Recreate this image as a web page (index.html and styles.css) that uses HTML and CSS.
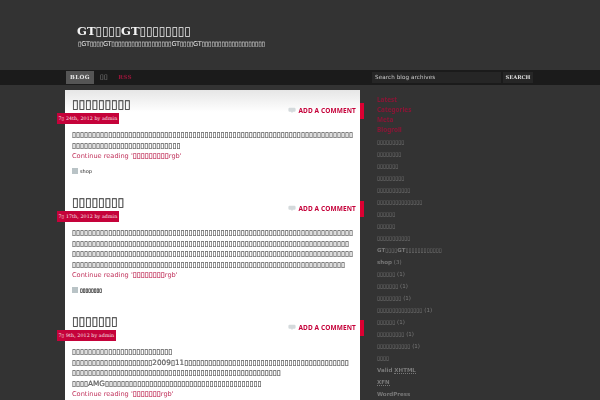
FILE: index.html
```html
<!DOCTYPE html>
<html lang="ja">
<head>
<meta charset="utf-8">
<title>GT blog</title>
<link rel="stylesheet" href="styles.css">
</head>
<body>
<div class="page">
<header class="masthead">
  <h1 class="site-title">GT▯▯▯▯GT▯▯▯▯▯▯▯▯</h1>
  <p class="site-desc">▯GT▯▯▯▯GT▯▯▯▯▯▯▯▯▯▯▯▯▯▯▯▯▯▯GT▯▯▯▯GT▯▯▯▯▯▯▯▯▯▯▯▯▯▯▯▯▯▯▯</p>
</header>
<nav class="navbar">
  <div class="nav-links">
    <a class="nav-active">BLOG</a>
    <a class="nav-plain">▯▯</a>
    <a class="nav-rss">RSS</a>
  </div>
  <form class="search">
    <div class="search-field">Search blog archives</div>
    <div class="search-btn">SEARCH</div>
  </form>
</nav>
<div class="columns">
  <main class="content">
    <article class="post">
      <div class="post-head">
        <h2 class="post-title">▯▯▯▯▯▯▯▯▯</h2>
        <a class="comment"><svg class="bubble" viewBox="0 0 10 8"><path d="M2 0.5h6a1.5 1.5 0 0 1 1.5 1.5v2a1.5 1.5 0 0 1-1.5 1.5H6L5 7.5 4 5.500H2A1.500 1.500 0 0 1 .5 4V2A1.500 1.500 0 0 1 2 .5z"/></svg>ADD A COMMENT</a>
      </div>
      <div class="date">7▯ 24th, 2012 by admin</div>
      <p class="body-text"><span class="box">▯▯▯▯▯▯▯▯▯▯▯▯▯▯▯▯▯▯▯▯▯▯▯▯▯▯▯▯▯▯▯▯▯▯▯▯▯▯▯▯▯▯▯▯▯▯▯▯▯▯▯▯▯▯▯▯▯▯▯▯▯▯▯▯▯▯▯▯▯▯<br>▯▯▯▯▯▯▯▯▯▯▯▯▯▯▯▯▯▯▯▯▯▯▯▯▯▯▯</span><br><a class="more">Continue reading '<span class="more-box">▯▯▯▯▯▯▯▯▯</span>rgb'</a></p>
      <div class="tags"><span class="tag-icon"></span>shop</div>
    </article>
    <article class="post">
      <div class="post-head">
        <h2 class="post-title">▯▯▯▯▯▯▯▯</h2>
        <a class="comment"><svg class="bubble" viewBox="0 0 10 8"><path d="M2 0.5h6a1.5 1.5 0 0 1 1.5 1.5v2a1.5 1.5 0 0 1-1.5 1.5H6L5 7.5 4 5.500H2A1.500 1.500 0 0 1 .5 4V2A1.500 1.500 0 0 1 2 .5z"/></svg>ADD A COMMENT</a>
      </div>
      <div class="date">7▯ 17th, 2012 by admin</div>
      <p class="body-text"><span class="box">▯▯▯▯▯▯▯▯▯▯▯▯▯▯▯▯▯▯▯▯▯▯▯▯▯▯▯▯▯▯▯▯▯▯▯▯▯▯▯▯▯▯▯▯▯▯▯▯▯▯▯▯▯▯▯▯▯▯▯▯▯▯▯▯▯▯▯▯▯▯<br>▯▯▯▯▯▯▯▯▯▯▯▯▯▯▯▯▯▯▯▯▯▯▯▯▯▯▯▯▯▯▯▯▯▯▯▯▯▯▯▯▯▯▯▯▯▯▯▯▯▯▯▯▯▯▯▯▯▯▯▯▯▯▯▯▯▯▯▯▯<br>▯▯▯▯▯▯▯▯▯▯▯▯▯▯▯▯▯▯▯▯▯▯▯▯▯▯▯▯▯▯▯▯▯▯▯▯▯▯▯▯▯▯▯▯▯▯▯▯▯▯▯▯▯▯▯▯▯▯▯▯▯▯▯▯▯▯▯▯▯▯<br>▯▯▯▯▯▯▯▯▯▯▯▯▯▯▯▯▯▯▯▯▯▯▯▯▯▯▯▯▯▯▯▯▯▯▯▯▯▯▯▯▯▯▯▯▯▯▯▯▯▯▯▯▯▯▯▯▯▯▯▯▯▯▯▯▯▯▯▯</span><br><a class="more">Continue reading '<span class="more-box">▯▯▯▯▯▯▯▯</span>rgb'</a></p>
      <div class="tags"><span class="tag-icon"></span><span class="tag-box">▯▯▯▯▯▯▯▯</span></div>
    </article>
    <article class="post">
      <div class="post-head">
        <h2 class="post-title">▯▯▯▯▯▯▯</h2>
        <a class="comment"><svg class="bubble" viewBox="0 0 10 8"><path d="M2 0.5h6a1.5 1.5 0 0 1 1.5 1.5v2a1.5 1.5 0 0 1-1.5 1.5H6L5 7.5 4 5.500H2A1.500 1.500 0 0 1 .5 4V2A1.500 1.500 0 0 1 2 .5z"/></svg>ADD A COMMENT</a>
      </div>
      <div class="date">7▯ 9th, 2012 by admin</div>
      <p class="body-text"><span class="box">▯▯▯▯▯▯▯▯▯▯▯▯▯▯▯▯▯▯▯▯▯▯▯▯▯<br>▯▯▯▯▯▯▯▯▯▯▯▯▯▯▯▯▯▯▯▯2009▯11▯▯▯▯▯▯▯▯▯▯▯▯▯▯▯▯▯▯▯▯▯▯▯▯▯▯▯▯▯▯▯▯▯▯▯▯▯▯▯▯▯<br>▯▯▯▯▯▯▯▯▯▯▯▯▯▯▯▯▯▯▯▯▯▯▯▯▯▯▯▯▯▯▯▯▯▯▯▯▯▯▯▯▯▯▯▯▯▯▯▯▯▯▯▯<br>▯▯▯▯AMG▯▯▯▯▯▯▯▯▯▯▯▯▯▯▯▯▯▯▯▯▯▯▯▯▯▯▯▯▯▯▯▯▯▯▯▯▯▯▯</span><br><a class="more">Continue reading '<span class="more-box">▯▯▯▯▯▯▯</span>rgb'</a></p>
    </article>
  </main>
  <aside class="sidebar">
    <ul class="tabs">
      <li>Latest</li>
      <li>Categories</li>
      <li>Meta</li>
      <li>Blogroll</li>
    </ul>
    <ul class="links">
      <li>▯▯▯▯▯▯▯▯▯</li>
      <li>▯▯▯▯▯▯▯▯</li>
      <li>▯▯▯▯▯▯▯</li>
      <li>▯▯▯▯▯▯▯▯▯</li>
      <li>▯▯▯▯▯▯▯▯▯▯▯</li>
      <li>▯▯▯▯▯▯▯▯▯▯▯▯▯▯▯</li>
      <li>▯▯▯▯▯▯</li>
      <li>▯▯▯▯▯▯</li>
      <li>▯▯▯▯▯▯▯▯▯▯▯</li>
      <li>GT▯▯▯▯GT▯▯▯▯▯▯▯▯▯▯▯▯</li>
      <li>shop <span class="count">(3)</span></li>
      <li>▯▯▯▯▯▯ <span class="count">(1)</span></li>
      <li>▯▯▯▯▯▯▯ <span class="count">(1)</span></li>
      <li>▯▯▯▯▯▯▯▯ <span class="count">(1)</span></li>
      <li>▯▯▯▯▯▯▯▯▯▯▯▯▯▯▯ <span class="count">(1)</span></li>
      <li>▯▯▯▯▯▯ <span class="count">(1)</span></li>
      <li>▯▯▯▯▯▯▯▯▯ <span class="count">(1)</span></li>
      <li>▯▯▯▯▯▯▯▯▯▯▯ <span class="count">(1)</span></li>
      <li>▯▯▯▯</li>
      <li>Valid <span class="abbr">XHTML</span></li>
      <li><span class="abbr">XFN</span></li>
      <li>WordPress</li>
    </ul>
  </aside>
</div>
</div>
</body>
</html>
```
FILE: styles.css
```css
* { box-sizing: border-box; }
html, body { margin: 0; padding: 0; height: 400px; overflow: hidden; }
body { background: #333333; font-family: "DejaVu Sans", sans-serif; }
ul { list-style: none; margin: 0; padding: 0; }
p, h1, h2 { margin: 0; }
.page { width: 600px; height: 400px; overflow: hidden; filter: blur(0.25px); }
.masthead { height: 70px; padding: 24px 0 0 77px; }
.site-title { font: bold 11.6px/15px "DejaVu Serif", serif; color: #f4f4f4; }
.site-desc { font-size: 6.6px; line-height: 9px; letter-spacing: -.29px; color: #e8e8e8; margin: 1px 0 0 1px; white-space: nowrap; }
.navbar { height: 15px; background: #1b1b1b; display: flex; align-items: center; padding-left: 66px; }
.nav-links { display: flex; align-items: center; width: 306px; }
.nav-links a { font: bold 5.6px/13px "DejaVu Serif", serif; letter-spacing: .4px; }
.nav-active { background: #555; color: #e6e6e6; padding: 0 4px; height: 13px; }
.nav-plain { color: #9a9a9a; margin-left: 6px; font-size: 6.8px !important; }
.nav-rss { color: #98163a; margin-left: 10px; }
.search { display: flex; align-items: center; gap: 2px; }
.search-field { width: 129px; height: 11px; background: #262626; color: #ccc; font-size: 5.6px; line-height: 11px; padding-left: 3px; letter-spacing: .1px; }
.search-btn { width: 30px; height: 11px; background: #262626; color: #ddd; font: bold 5.2px/11px "DejaVu Serif", serif; text-align: center; }
.columns { display: flex; padding: 5px 0 0 65px; }
.content { width: 295px; height: 400px; background: linear-gradient(#e6e6e6, #fff 22px, #fff); padding: 7px 8px 0 7px; flex: none; }
.post { padding-bottom: 20.5px; position: relative; }
.post-head { display: flex; justify-content: space-between; align-items: flex-start; height: 15px; }
.post-title { font: normal 11.8px/15px "DejaVu Sans", sans-serif; color: #3c3c3c; -webkit-text-stroke: .25px #3c3c3c; }
.comment { display: flex; align-items: center; gap: 2px; font: bold 6.5px/9px "Noto Sans", sans-serif; color: #c5023a; letter-spacing: .12px; margin-top: 9px; margin-right: -4px; }
.bubble { width: 8px; height: 7px; fill: #d4dadc; }
.comment::after { content: ""; position: absolute; left: 288px; top: 6px; width: 4px; height: 16px; background: #dc0032; }
.date { position: relative; left: -15.5px; width: max-content; height: 11px; background: #c5023a; color: #f8e6ea; padding: 0 2px; font: 4.8px/11px "DejaVu Serif", serif; letter-spacing: .06px; margin-top: 1px; }
.body-text { font-size: 7.3px; line-height: 10.5px; color: #5c5c5c; margin-top: 6px; white-space: nowrap; }
.box { -webkit-text-stroke: .2px #5c5c5c; }
.more { color: #c0305a; font-size: 6.6px; }
.more-box { font-size: 7.3px; -webkit-text-stroke: .15px #c0305a; }
.tags { display: flex; align-items: center; gap: 2px; font: 5px/8px "DejaVu Sans", sans-serif; color: #222; margin-top: 5px; }
.tag-box { -webkit-text-stroke: .2px #111; color: #111; }
.tag-icon { width: 6px; height: 6px; background: #b9c3c6; }
.sidebar { padding: 5px 0 0 17px; }
.tabs { font: bold 6.4px/9.9px "Noto Sans", sans-serif; color: #8c1536; }
.links { font: bold 5.5px/12px "DejaVu Sans", sans-serif; color: #7a7a7a; margin-top: 1px; }
.count { font-weight: normal; }
.abbr { border-bottom: 1px dotted #777; }
```
